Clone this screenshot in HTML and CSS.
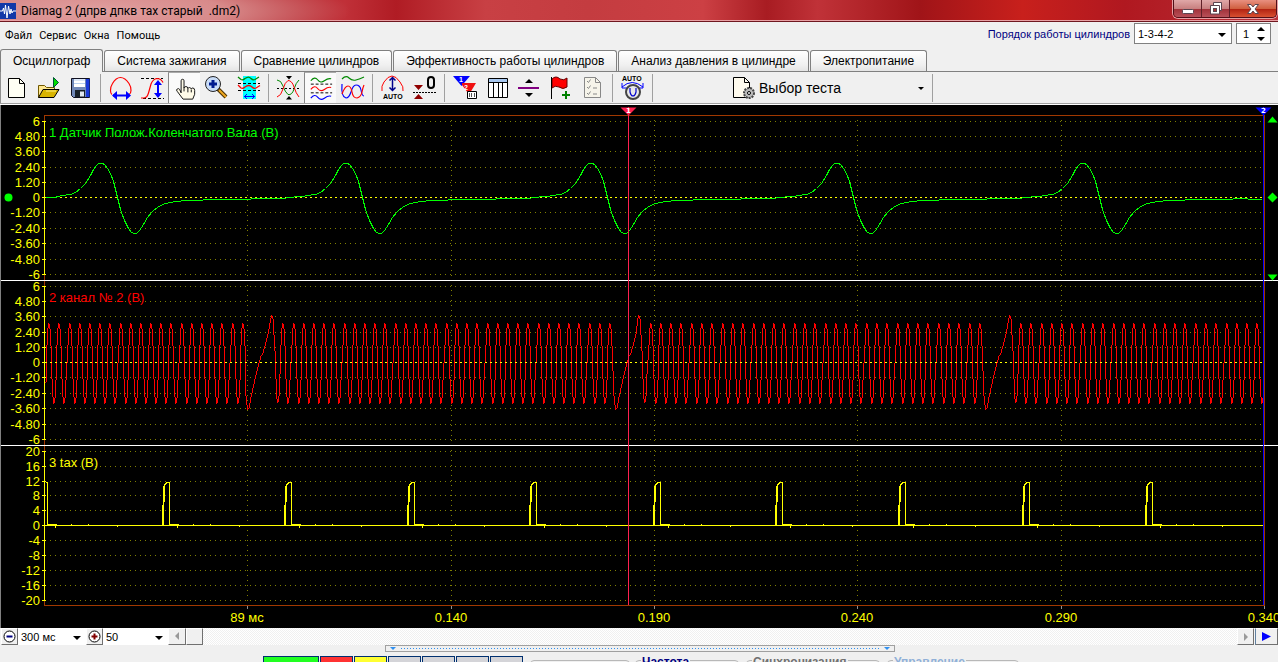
FILE: index.html
```
<!DOCTYPE html>
<html lang="ru">
<head>
<meta charset="utf-8">
<title>Diamag 2</title>
<link rel="stylesheet" href="styles.css">
</head>
<body>
<div class="app">
  <header class="titlebar">
    <svg class="app-icon" viewBox="0 0 16 16" width="16" height="16"><rect width="16" height="16" fill="#1238a8"/><path d="M0 8h2.500l1-3 1 6 1-9 1.500 13 1.500-12 1.500 8 1-5 1 4 1-2h4" fill="none" stroke="#fff"/></svg>
    <h1 class="title">Diamag 2 (дпрв дпкв тах старый  .dm2)</h1>
    <div class="window-buttons">
      <button class="wbtn wbtn-min" aria-label="Свернуть"><svg width="14" height="12" viewBox="0 0 14 12"><rect x="1.500" y="6.500" width="11" height="4" rx="1" fill="#fff" stroke="#5a4550"/></svg></button>
      <button class="wbtn wbtn-max" aria-label="Развернуть"><svg width="14" height="13" viewBox="0 0 14 13"><path d="M4.500 .5h8v8h-2v3.500h-9v-8.500h3z" fill="#fff" stroke="#5a4550"/><path d="M3 3.500h7.500v7" fill="none" stroke="#5a4550"/><rect x="4.500" y="6.500" width="3" height="3" fill="#a33" stroke="#5a4550"/></svg></button>
      <button class="wbtn wbtn-close" aria-label="Закрыть"><svg width="14" height="12" viewBox="0 0 14 12"><path d="M1.500 1.500h3.500l2 2.500 2-2.500h3.500l-3.500 4.500 3.500 4.500h-3.500l-2-2.500-2 2.500h-3.500l3.500-4.500z" fill="#fff" stroke="#5a4550"/></svg></button>
    </div>
  </header>

  <div class="menubar">
    <nav class="menu">
      <button>Файл</button><button>Сервис</button><button>Окна</button><button>Помощь</button>
    </nav>
    <div class="firing">
      <label for="order">Порядок работы цилиндров</label>
      <span class="drop boxed order"><select id="order"><option>1-3-4-2</option></select></span>
      <span class="spin boxed"><input id="cyl" type="text" value="1" aria-label="Номер цилиндра"><span class="spin-arrows"><i class="up"></i><i class="down"></i></span></span>
    </div>
  </div>

  <nav class="tabs">
    <button class="tab active">Осциллограф</button>
    <button class="tab">Система зажигания</button>
    <button class="tab">Сравнение цилиндров</button>
    <button class="tab">Эффективность работы цилиндров</button>
    <button class="tab">Анализ давления в цилиндре</button>
    <button class="tab">Электропитание</button>
  </nav>

  <div class="toolbar">
    <button class="tool" aria-label="Новый"><svg viewBox="0 0 32 31"><path d="M8.500 6.500h11l5 5v14h-16z" fill="#fffff4" stroke="#000"/><path d="M19.500 6.500v5h5" fill="none" stroke="#000"/></svg></button>
    <button class="tool" aria-label="Открыть"><svg viewBox="0 0 32 31"><path d="M6.500 25.500v-12h6l2 2h8v3" fill="#ffe890" stroke="#705800"/><path d="M6.500 25.500l4.500-8h16l-5 8z" fill="#d8b400" stroke="#000"/><path d="M14 19h10" stroke="#fff080"/><path d="M21.500 5.500v10l5-5z" fill="#0d0" stroke="#053" stroke-width="1"/></svg></button>
    <button class="tool" aria-label="Сохранить"><svg viewBox="0 0 32 31"><path d="M7.500 6.500h18v19h-16l-2-2z" fill="#7088b8" stroke="#101020"/><path d="M22 7h3.500v18h-3.500z" fill="#1838d8"/><path d="M10 7h11v8h-11z" fill="#fff"/><path d="M10 8h11M10 11.500h11" stroke="#b8d0f0"/><path d="M11 18h10v7h-10z" fill="#182028"/><path d="M16 19.500h4v5h-4z" fill="#e0e8f0"/></svg></button>
    <span class="sep"></span>
    <button class="tool" aria-label="Период"><svg viewBox="0 0 32 31"><path d="M8 22.500q-1.500-1-1.500-4 0-4 2-7 3.500-6 8-6t8.500 6q2 3 2 7 0 3-2 4" fill="none" stroke="#f00" stroke-width="1.200"/><path d="M9 23.500h16" stroke="#00f" stroke-width="2"/><path d="M8 23.500l5-4.500v9zM27 23.500l-5-4.500v9z" fill="#00f"/></svg></button>
    <button class="tool" aria-label="Амплитуда"><svg viewBox="0 0 32 31"><path d="M5 6.500h22M7 26.500h21" stroke="#000" stroke-dasharray="3 2"/><path d="M5 26h3q3 0 4.500-5l2.500-9q2-5 6-5.500 4 0 6 4" fill="none" stroke="#f00" stroke-width="1.200"/><path d="M22 10v14" stroke="#00f" stroke-width="2"/><path d="M22 8l-4 5h8zM22 26l-4-5h8z" fill="#00f"/></svg></button>
    <button class="tool pressed" aria-label="Рука"><svg viewBox="0 0 32 31"><path d="M12.500 20.500v-12.500q0-1.500 1.500-1.500t1.500 1.500v7.500q.5-1.500 2-1.500 2 0 2 2 .5-1 1.500-1 1.500 0 2 1.500.5-1 1.500-1 2 0 2 2.500v4l-2 5h-10l-6-8q-1.500-1.500 0-2.500t2.500.5z" fill="#fffbe8" stroke="#111"/><path d="M15.500 15v4M19.500 16v4M23 17v3" stroke="#111"/></svg></button>
    <button class="tool" aria-label="Масштаб"><svg viewBox="0 0 32 31"><path d="M18 17l8 8" stroke="#4a3000" stroke-width="4"/><path d="M19 18l7 7" stroke="#f0a820" stroke-width="2"/><circle cx="13" cy="12" r="7.500" fill="#c8dcf8" stroke="#222"/><path d="M13 8v8M9 12h8" stroke="#001c90" stroke-width="3"/></svg></button>
    <button class="tool" aria-label="Участок"><svg viewBox="0 0 32 31"><path d="M11 4h13v23h-13z" fill="#0ff"/><path d="M6 5l3 2.500q2 1 4-1l2-1q2-1 4 1t4 1l4-2.500" fill="none" stroke="#080" stroke-width="1.300"/><path d="M6 11.500h22M6 18.500h22" stroke="#000" stroke-dasharray="3 2"/><path d="M6 13l3 3q2 1 4-1 4-3 7 0 2 2 4 1l4-2.500" fill="none" stroke="#f00" stroke-width="1.300"/><path d="M12 24.500h11M15 22l-2.500 2.500 2.500 2.500M20 22l2.500 2.500-2.500 2.500" fill="none" stroke="#00f"/></svg></button>
    <span class="sep"></span>
    <button class="tool" aria-label="Центр"><svg viewBox="0 0 32 31"><path d="M5 16.500h23" stroke="#000" stroke-dasharray="2 2"/><path d="M5 8q4 0 6 6t5 8.500q4 1 6-5.500t5-9" fill="none" stroke="#080"/><path d="M5 25q4-1 6-8t5-8.500q4 0 6 6.500t5 10" fill="none" stroke="#f00"/><path d="M14 4h6l-3 3.500zM14 27.500h6l-3-3.500z"/></svg></button>
    <button class="tool pressed" aria-label="Раздельно"><svg viewBox="0 0 32 31"><path d="M6 8q4-5 7-1t7 1 7-2" fill="none" stroke="#080" stroke-width="1.200"/><path d="M6 11.500h22M6 20.500h22" stroke="#000" stroke-dasharray="3 2"/><path d="M6 17q4-5 7-1t7 1 7-2" fill="none" stroke="#f00" stroke-width="1.200"/><path d="M6 26q4-5 7-1t7 1 7-2" fill="none" stroke="#00f" stroke-width="1.200"/></svg></button>
    <button class="tool" aria-label="Совместно"><svg viewBox="0 0 32 31"><path d="M6 7q4-4 7-1t7 2 8-3" fill="none" stroke="#080" stroke-width="1.200"/><path d="M6 12q-1 13 4 14 3 0 5-6 2-7 5-7 4 0 5 5 1 6 3 6" fill="none" stroke="#00f" stroke-width="1.200"/><path d="M6 22q3-8 6-8t4 6 5 6q4-1 5-6t2-7" fill="none" stroke="#f00" stroke-width="1.200"/></svg></button>
    <span class="sep"></span>
    <button class="tool" aria-label="Авто амплитуда"><svg viewBox="0 0 32 31"><path d="M6 19q-1-5 2-9 4-6 8-6t8 6q4 5 3 9" fill="none" stroke="#f00"/><path d="M16.500 6v12M13.500 8.500l3-3 3 3M13.500 15.500l3 3 3-3" fill="none" stroke="#00008b" stroke-width="1.500"/><text x="7" y="27" class="auto">AUTO</text></svg></button>
    <button class="tool" aria-label="Ноль"><svg viewBox="0 0 32 31"><rect x="20" y="5" width="6" height="11" rx="3" fill="none" stroke="#000" stroke-width="2"/><path d="M5 20.500h23" stroke="#000" stroke-dasharray="2 1"/><path d="M6 13h9l-4.500 5zM6 27h9l-4.500-5z" fill="#900000"/></svg></button>
    <span class="sep"></span>
    <button class="tool" aria-label="Маркеры"><svg viewBox="0 0 32 31"><path d="M5 4h17l-8.500 10z" fill="#00f"/><path d="M14 11h14l-6 10h-2l-6-8z" fill="#f01010"/><text x="11" y="10" class="mark">1</text><text x="16" y="18" class="mark">2</text><path d="M19.500 19.500h9v7h-9z" fill="#fff" stroke="#000"/><path d="M21.500 21v4M23.500 21v4M26.500 21v4" stroke="#555"/></svg></button>
    <button class="tool" aria-label="Таблица"><svg viewBox="0 0 32 31"><path d="M8.500 6.500h19v19h-19z" fill="#fff" stroke="#000"/><path d="M9 7h18v3h-18z" fill="#a8c8f0"/><path d="M8 10.500h20M13.500 10v15M18.500 10v15M22.500 10v15" stroke="#000"/></svg></button>
    <button class="tool" aria-label="Разделить"><svg viewBox="0 0 32 31"><path d="M6 15h21v2h-21z" fill="#800080"/><path d="M13 11h8l-4-4zM13 21h8l-4 4z"/></svg></button>
    <button class="tool" aria-label="Флаг"><svg viewBox="0 0 32 31"><path d="M8 7q4-4 8 0 4 2 7-1v9q-4 3-8 0-4-2-7 1z" fill="#f00" stroke="#600"/><path d="M7.500 5v22" stroke="#000"/><path d="M22 19v8M18 23h8" stroke="#008000" stroke-width="2"/></svg></button>
    <button class="tool" aria-label="Отчёт"><svg viewBox="0 0 32 31"><path d="M8.500 5.500h11l5 5v15h-16z" fill="#f6f4ea" stroke="#888"/><path d="M19.500 5.500v5h5M11 9l1.500 1.500 2-3M11 15l1.500 1.500 2-3M11 21l1.500 1.500 2-3M17 16h4M17 22h4" fill="none" stroke="#888"/></svg></button>
    <span class="sep"></span>
    <button class="tool" aria-label="Авто напряжение"><svg viewBox="0 0 32 31"><text x="6" y="9" class="auto">AUTO</text><path d="M6 15q10-9 21 0M6 11v5h5M27 11v5h-5" fill="none" stroke="#00f"/><circle cx="17" cy="20" r="7" fill="#e8e8e8" stroke="#444" stroke-width="2"/><path d="M14 16v4q1 4 3 4t3-4v-4" fill="none" stroke="#00c" stroke-width="1.200"/></svg></button>
    <span class="sep"></span>
    <button class="test-picker">
      <svg width="24" height="24" viewBox="0 0 24 24"><path d="M1.500 1.500h11l5 5v15h-16z" fill="#fffbee" stroke="#000"/><path d="M12.500 1.500v5h5" fill="none" stroke="#000"/><circle cx="17" cy="17" r="5" fill="#bbb" stroke="#444" stroke-width="2" stroke-dasharray="2 1"/><circle cx="17" cy="17" r="1.500" fill="#fff" stroke="#000"/></svg>
      <span>Выбор теста</span><i class="caret"></i>
    </button>
    <span class="sep"></span>
  </div>

  <main class="scope"><svg id="plot" class="plot"></svg></main>

  <div class="timebar">
    <button class="tb zoom-out" aria-label="Уменьшить"><svg width="15" height="15" viewBox="0 0 15 15"><circle cx="7.500" cy="7.500" r="5.500" fill="#fff" stroke="#000"/><path d="M4.500 7.500h6" stroke="#000080" stroke-width="2"/></svg></button>
    <span class="drop span"><select aria-label="Развёртка"><option>300 мс</option></select></span>
    <button class="tb" aria-label="Увеличить"><svg width="15" height="15" viewBox="0 0 15 15"><circle cx="7.500" cy="7.500" r="5.500" fill="#fff" stroke="#000"/><path d="M4.500 7.500h6M7.500 4.500v6" stroke="#800000" stroke-width="2"/></svg></button>
    <span class="drop gain"><select aria-label="Масштаб"><option>50</option></select></span>
    <button class="tb arrow" aria-label="Влево"><svg width="15" height="15" viewBox="0 0 15 15"><path d="M9 3v8l-4-4z" fill="#999"/></svg></button>
    <div class="track"><span class="thumb"></span></div>
    <button class="tb" aria-label="Вправо"><svg width="15" height="15" viewBox="0 0 15 15"><path d="M6 4v8l4-4z" fill="#999"/></svg></button>
    <button class="tb play" aria-label="Пуск"><svg width="15" height="15" viewBox="0 0 15 15"><path d="M3 3v9l9-4.500z" fill="#00f"/></svg></button>
  </div>

  <div class="splitter"><i></i><span></span><i></i></div>

  <footer class="panel">
    <div class="channels">
      <button class="ch green" aria-label="Канал 1"></button><button class="ch red" aria-label="Канал 2"></button><button class="ch yellow" aria-label="Канал 3"></button><button class="ch" aria-label="Канал 4"></button><button class="ch" aria-label="Канал 5"></button><button class="ch" aria-label="Канал 6"></button><button class="ch" aria-label="Канал 7"></button>
    </div>
    <div class="group blank"></div>
    <div class="group freq"><b>Частота</b></div>
    <div class="group sync"><b>Синхронизация</b></div>
    <div class="group ctl"><b>Управление</b></div>
  </footer>
</div>
<script src="script.js"></script>
</body>
</html>
```
FILE: styles.css
```
* { box-sizing: border-box; }
body { margin: 0; background: #f0f0f0; color: #000; font: 11px "Liberation Sans", Arial, sans-serif; overflow: hidden; }
button, select, input { font: inherit; color: inherit; margin: 0; padding: 0; border: 0; background: none; border-radius: 0; }
select { appearance: none; outline: none; }
.app { display: flex; flex-direction: column; height: 100vh; }

.titlebar { height: 22px; flex: none; display: flex; align-items: center; gap: 5px; border-bottom: 1px solid #701820; box-shadow: inset 0 -1px #e8a0a4;
  background: radial-gradient(ellipse 250px 40px at 100px 11px, #e0a0a0 0, #d88a8a 50%, transparent 100%),
    linear-gradient(90deg, #a82028 0, #b83038 20%, #c03038 27%, #b01c24 31%, #c84044 38%, #c43c40 46%, #cc4044 55%, #a81c22 60%, #c03238 64%, #a01418 72%, #c8201c 80%, #b01820 88%, #b83038 100%); }
.app-icon { flex: none; }
.title { flex: 1; margin: 0; font: 12px Roboto, "Noto Sans", sans-serif; white-space: pre; }
.window-buttons { display: flex; align-self: flex-start; height: 18px; margin-right: 1px; border: 1px solid #501018; border-top: 0; border-radius: 0 0 5px 5px; overflow: hidden; box-shadow: 0 0 0 1px #e8a0a4; }
.wbtn { width: 28px; display: flex; align-items: center; justify-content: center; background: linear-gradient(#e0a8a8, #c88080 50%, #a03038 51%, #b85058); border-right: 1px solid #602028; }
.wbtn-close { width: 46px; border-right: 0; background: linear-gradient(#e89080, #d06040 50%, #b02010 51%, #d85030); }

.menubar { height: 27px; flex: none; display: flex; align-items: center; justify-content: space-between; padding: 0 7px 0 5px; }
.menu { display: flex; gap: 7px; font: 11px Roboto, "Noto Sans", sans-serif; }
.firing { display: flex; align-items: center; gap: 4px; align-self: flex-start; padding-top: 1px; }
.firing label { color: #000080; }
.boxed { height: 21px; background: #fff; border: 1px solid #808080; }
.drop { position: relative; display: block; }
.drop select { width: 100%; height: 100%; padding-left: 3px; }
.drop::after, .caret { content: ""; border: 4px solid transparent; border-top-color: #000; border-bottom: 0; }
.drop::after { position: absolute; right: 5px; top: 50%; margin-top: -1px; pointer-events: none; }
.order { width: 98px; }
.spin { width: 35px; display: flex; align-items: center; }
.spin input { width: 20px; padding-left: 6px; outline: none; }
.spin-arrows { display: flex; flex-direction: column; gap: 6px; }
.spin-arrows i { border: 4px solid transparent; }
.spin-arrows .up { border-top: 0; border-bottom-color: #000; }
.spin-arrows .down { border-bottom: 0; border-top-color: #000; }

.tabs { height: 23px; flex: none; display: flex; align-items: flex-end; gap: 1px; border-bottom: 1px solid #808080; font-size: 12px; }
.tab { height: 21px; padding: 0 12px; border: 1px solid #808080; border-bottom: 0; border-radius: 3px 3px 0 0; background: linear-gradient(#fff, #f0f0f0 70%, #e4e4e4); white-space: nowrap; }
.tab.active { height: 23px; margin-bottom: -1px; background: #f0f0f0; }

.toolbar { height: 33px; flex: none; display: flex; border-bottom: 1px solid #fff; box-shadow: inset 0 -1px #a0a0a0, inset 1px 0 #909090; }
.tool { width: 32px; height: 31px; flex: none; }
.tool svg { display: block; width: 32px; height: 31px; }
.tool.pressed { border-left: 1px solid #888; border-top: 1px solid #aaa; background: #fafafa; }
.tool.pressed svg { width: 31px; height: 30px; }
.sep { width: 8px; flex: none; margin: 2px 0; background: linear-gradient(#a0a0a0, #a0a0a0) 4px 0 / 1px 100% no-repeat; }
.auto { font: bold 7px "Liberation Sans", sans-serif; }
.mark { font: bold 7px "Liberation Sans", sans-serif; fill: #fff; }
.test-picker { display: flex; align-items: center; width: 200px; margin-left: 72px; padding: 0 4px; gap: 3px; font-size: 14px; }
.test-picker span { flex: 1; text-align: left; }
.caret { border-width: 3px; border-bottom: 0; }

.scope { flex: 1; min-height: 0; background: #000; border-left: 1px solid #808080; }
.plot { display: block; width: 100%; height: 100%; font: 13px "Liberation Sans", Arial, sans-serif; }
.plot path, .plot line, .plot rect { shape-rendering: crispEdges; fill: none; }
.plot .grid { stroke: #808000; stroke-dasharray: 1 4; }
.plot .zeroline { stroke: #ff0; stroke-dasharray: 2 3; }
.plot .frame { stroke: #a03800; }
.plot .axis { stroke: #ff0; }
.plot .divider { stroke: #fff; }
.plot .timetick { stroke: #909090; }
.plot .green { stroke: #0f0; }
.plot .red { stroke: #f00; }
.plot .yellow { stroke: #ff0; }
.plot .cursor1 { stroke: #ff2050; }
.plot .cursor2 { stroke: #00f; }
.plot .fill-green { fill: #0f0; }
.plot .fill-pink { fill: #ff2050; }
.plot .fill-blue { fill: #00f; }
.plot .label { fill: #ff0; }
.plot .label-green { fill: #0f0; }
.plot .label-red { fill: #f00; }
.plot .flag { fill: #fff; font: bold 7px "DejaVu Sans", sans-serif; }

.timebar { height: 17px; flex: none; display: flex; padding-left: 1px; background: #f4f4f4; }
.tb { width: 17px; flex: none; display: flex; align-items: center; justify-content: center; background: #f0f0f0; border: 1px solid #fff; border-right-color: #707070; border-bottom-color: #707070; }
.span { width: 68px; background: #fff; }
.gain { width: 65px; background: #fff; }
.track { flex: 1; background: repeating-conic-gradient(#fff 0 25%, #f0f0f0 0 50%) 0 0 / 2px 2px; }
.arrow { width: 18px; }
.thumb { display: block; width: 17px; height: 17px; background: #f0f0f0; border: 1px solid #fff; border-right-color: #707070; border-bottom-color: #707070; }
.play { width: 23px; margin-left: 1px; border-left: 1px solid #6080a0; }

.splitter { width: 510px; height: 7px; flex: none; margin-left: 385px; display: flex; align-items: center; gap: 5px; padding: 0 4px; border: 1px solid #a0a0a0; }
.splitter i { border: 3px solid transparent; border-top-color: #3090f0; border-bottom: 0; }
.splitter span { flex: 1; height: 1px; background: repeating-linear-gradient(90deg, #3090f0 0 1px, transparent 1px 3px); }

.panel { height: 10px; flex: none; display: flex; align-items: flex-start; padding: 4px 0 0 263px; overflow: hidden; font-size: 12px; }
.channels { display: flex; gap: 1px; }
.ch { width: 33px; height: 24px; border: 1px solid #003070; background: #d4d4d8; }
.ch.green { width: 56px; background: #2f2; }
.ch.red { background: #f33; }
.ch.yellow { background: #ff3; }
.group { height: 40px; margin-top: 4px; border: 1px solid #b8b8b8; border-radius: 4px; padding-left: 5px; }
.group b { display: inline-block; line-height: 14px; margin-top: -6px; padding: 0 1px; background: #f0f0f0; vertical-align: top; }
.blank { width: 100px; margin-left: 7px; }
.freq { width: 104px; margin-left: 5px; color: #000080; }
.sync { width: 134px; margin-left: 7px; color: #707070; }
.ctl { width: 132px; margin-left: 7px; color: #90b0d8; }
```
FILE: script.js
```
(function () {
  var svg = document.getElementById('plot');
  var NS = 'http://www.w3.org/2000/svg';
  var BASE_W = 1277, BASE_H = 523;
  var sx, sy;

  function X(x) { return Math.round((x - 1) * sx) + 0.5; }
  function Y(y) { return Math.round((y - 105) * sy) + 0.5; }

  function add(tag, attrs, text) {
    var el = document.createElementNS(NS, tag);
    for (var k in attrs) el.setAttribute(k, attrs[k]);
    if (text) el.textContent = text;
    svg.appendChild(el);
  }
  function hline(x1, x2, y, cls) {
    add('path', { d: 'M' + (X(x1) - 0.5) + ' ' + Y(y) + 'H' + X(x2), 'class': cls });
  }
  function vline(x, y1, y2, cls) {
    add('path', { d: 'M' + X(x) + ' ' + (Y(y1) - 0.5) + 'V' + (Y(y2) + 0.5), 'class': cls });
  }
  function trace(points, cls) {
    add('path', { d: 'M' + points.map(function (p) { return X(p[0]) + ' ' + Y(p[1]); }).join('L'), 'class': cls });
  }
  // Draws a dense signal as one vertical bar for each pixel column.
  function columns(points, cls) {
    var i = 0, d = '', last = null;
    var end = Math.round((points[points.length - 1][0] - 1) * sx);
    for (var px = Math.round((points[0][0] - 1) * sx); px <= end; px++) {
      var x = px / sx + 1;
      while (i < points.length - 2 && points[i + 1][0] < x) i++;
      var a = points[i], b = points[i + 1];
      var t = Math.max(0, Math.min(1, (x - a[0]) / (b[0] - a[0])));
      var y = Math.round((a[1] + (b[1] - a[1]) * t - 105) * sy);
      if (last === null) last = y;
      var top = y, bottom = y + 1;
      if (last > y) bottom = last;
      if (last < y) top = last + 1;
      d += 'M' + (px + 0.5) + ' ' + top + 'V' + bottom;
      last = y;
    }
    add('path', { d: d, 'class': cls });
  }
  function label(x, y, text, cls, anchor) {
    add('text', { x: X(x) - 0.5, y: Y(y) - 0.5, 'class': cls, 'text-anchor': anchor || 'start' }, text);
  }

  var volts = ['6', '4.80', '3.60', '2.40', '1.20', '0', '-1.20', '-2.40', '-3.60', '-4.80', '-6'];
  var channels = [
    { ys: [121, 136, 151, 167, 182, 197, 212, 228, 243, 259, 274], names: volts, title: '1 Датчик Полож.Коленчатого Вала (В)', cls: 'label-green' },
    { ys: [286, 301, 316, 332, 347, 362, 377, 393, 408, 424, 439], names: volts, title: '2 канал № 2 (В)', cls: 'label-red' },
    { ys: [451, 466, 481, 495, 510, 525, 540, 555, 570, 585, 600], names: ['20', '16', '12', '8', '4', '0', '-4', '-8', '-12', '-16', '-20'], title: '3 tax (В)', cls: 'label' }
  ];

  // One crankshaft pulse: offset from its maximum, screen level.
  var pulse = [[-43, 196], [-38, 195], [-30, 194], [-25, 192], [-20, 188], [-15, 183], [-10, 175], [-7, 169], [-4, 165], [-2, 163], [2, 163],
    [4, 164], [7, 168], [10, 173], [13, 181], [15, 189], [17, 197], [20, 209], [24, 220], [28, 228], [31, 232], [34, 233], [36, 233], [39, 230],
    [43, 224], [47, 217], [52, 211], [58, 206], [65, 203], [75, 201], [80, 201], [81, 200], [102, 200], [103, 199], [150, 199], [151, 198], [185, 198], [186, 197]];

  function crank() {
    var pts = [[45, 197], [55, 197]];
    [100, 345, 590, 836, 1082].forEach(function (c) {
      pulse.forEach(function (p) {
        var x = c + p[0];
        if (x <= 1262) pts.push([x, p[1]]);
      });
    });
    pts.push([1262, 199]);
    return pts;
  }

  function teeth() {
    var pts = [[45, 382]];
    var runs = [[48.3, 20, 10.18, 247, 271], [282.3, 33, 10.21, 615, 638], [649.6, 33, 10.29, 985, 1009], [1020, 24, 10.28, 0, 0]];
    runs.forEach(function (r) {
      for (var i = 0; i < r[1]; i++) {
        var p = Math.round(r[0] + i * r[2]);
        pts.push([p - 2, 345], [p - 1, 328], [p, 323], [p + 1, 328], [p + 2, 345]);
        if (i < r[1] - 1 || !r[3]) pts.push([p + 3, 378], [p + 4, 396], [p + 5, 403], [p + 6, 398], [p + 7, 380]);
      }
      if (r[3]) {
        var t = r[3], q = r[4];
        pts.push([t - 2, 395], [t - 1, 404], [t, 409], [t + 1, 408], [t + 3, 397], [t + 7, 379], [t + 11, 363], [t + 13, 356], [t + 15, 353],
          [t + 18, 342], [t + 20, 334], [q - 1, 318], [q, 315], [q + 1, 318], [q + 3, 350], [q + 4, 378], [q + 5, 398], [q + 6, 402], [q + 7, 396], [q + 8, 374]);
      }
    });
    return pts.filter(function (p) { return p[0] <= 1262; });
  }

  function tacho() {
    var falls = [47, 169, 291, 414, 536, 660, 782, 905, 1029, 1152];
    hline(45, 1263, 525, 'yellow');
    falls.forEach(function (f, i) {
      if (i) trace([[f - 7, 525], [f - 7, 510], [f - 6, 500], [f - 6, 487], [f - 4, 483], [f - 2, 482], [f, 482], [f, 525]], 'yellow');
      else trace([[45, 482], [f, 482], [f, 525]], 'yellow');
      if (i) trace([[f - 6, 525], [f - 6, 505], [f - 5, 498], [f - 5, 485]], 'yellow');
      hline(f, f + 9, 524, 'yellow');
      vline(f + 8, 524, 527, 'yellow');
      vline(f + 24, 524, 525, 'yellow');
      vline(f + 41, 524, 525, 'yellow');
      vline(f + 70, 525, 526, 'yellow');
    });
  }

  function shape(cx, cy, pts, cls) {
    var ox = X(cx), oy = Y(cy);
    add('polygon', { points: pts.map(function (p) { return (ox + p[0]) + ',' + (oy + p[1]); }).join(' '), 'class': cls });
  }

  function draw() {
    svg.textContent = '';
    sx = svg.clientWidth / BASE_W;
    sy = svg.clientHeight / BASE_H;
    add('path', { d: 'M' + X(44) + ' ' + Y(115) + 'H' + X(1264) + 'V' + Y(605) + 'H' + X(44) + 'Z', 'class': 'frame' });
    [247, 451, 654, 857, 1061].forEach(function (x) {
      vline(x, 120, 604, 'grid');
    });
    ['89 мс', '0.140', '0.190', '0.240', '0.290', '0.340'].forEach(function (t, i) {
      var x = [247, 451, 654, 857, 1061, 1264][i];
      vline(x, 606, 608, 'timetick');
      label(x, 622, t, 'label', 'middle');
    });
    channels.forEach(function (c) {
      c.ys.forEach(function (y, i) {
        hline(45, 1262, y, i === 5 ? 'zeroline' : 'grid');
        hline(42, 45, y, 'axis');
        label(40, y + 5, c.names[i], 'label', 'end');
      });
      vline(44, c.ys[0], c.ys[10], 'axis');
      label(49, c.ys[0] + 16, c.title, c.cls);
    });
    trace(crank(), 'green');
    columns(teeth(), 'red');
    hline(45, 1262, 362, 'zeroline');
    tacho();
    hline(1, 1278, 280, 'divider');
    hline(1, 1278, 445, 'divider');
    vline(628, 107, 604, 'cursor1');
    vline(1263, 107, 604, 'cursor2');
    shape(628, 107, [[-8, 0], [8, 0], [0, 8]], 'fill-pink');
    shape(1263, 107, [[-8, 0], [8, 0], [0, 8]], 'fill-blue');
    label(626, 113, '1', 'flag');
    label(1261, 113, '2', 'flag');
    shape(1272, 116, [[0, 0], [5, 6], [-5, 6]], 'fill-green');
    shape(1272, 274, [[-5, 0], [5, 0], [0, 6]], 'fill-green');
    shape(1272, 197, [[0, -5], [5, 0], [0, 5], [-5, 0]], 'fill-green');
    add('circle', { cx: X(8), cy: Y(197), r: 4, 'class': 'fill-green' });
  }

  draw();
  window.addEventListener('resize', draw);
})();
```
